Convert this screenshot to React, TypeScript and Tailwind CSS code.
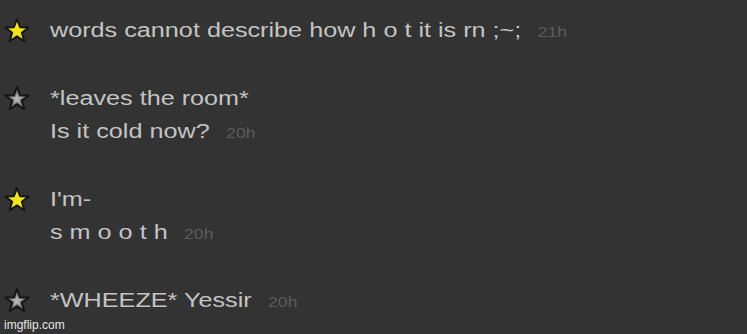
const Star = ({ filled }: { filled: boolean }) => (
  <svg width="28" height="28" viewBox="0 0 26 26" className="block">
    <path
      d="M13 2 L15.9 9.5 L23.8 9.7 L17.5 14.7 L19.8 22.5 L13 18 L6.2 22.5 L8.5 14.7 L2.2 9.7 L10.1 9.5 Z"
      fill={filled ? "#f2e41c" : "#777777"}
      stroke="#141414"
      strokeWidth="1.8"
      strokeLinejoin="round"
    />
    {!filled && (
      <path
        d="M13 7.5 L14.3 11.2 L18.2 11.4 L15.1 13.8 L16.2 17.6 L13 15.4 L9.8 17.6 L10.9 13.8 L7.8 11.4 L11.7 11.2 Z"
        fill="#b4b4b4"
      />
    )}
  </svg>
)

type Msg = { starred: boolean; lines: string[]; time: string }

const messages: Msg[] = [
  { starred: true, lines: ["words cannot describe how h o t it is rn ;~;"], time: "21h" },
  { starred: false, lines: ["*leaves the room*", "Is it cold now?"], time: "20h" },
  { starred: true, lines: ["I'm-", "s m o o t h"], time: "20h" },
  { starred: false, lines: ["*WHEEZE* Yessir"], time: "20h" },
]

export default function App() {
  return (
    <div
      className="w-[747px] h-[334px] bg-[#333333] relative overflow-hidden"
      style={{ fontFamily: '"Liberation Sans", Arial, sans-serif' }}
    >
      <div className="flex flex-col pt-[14px] gap-[33px]">
        {messages.map((m, i) => (
          <div key={i} className="flex flex-row">
            <div className="w-[50px] pl-[3px] pt-[3px] shrink-0">
              <Star filled={m.starred} />
            </div>
            <div className="flex flex-col text-[20px] leading-[33px] text-[#c4c4c4] whitespace-pre origin-left scale-x-[1.26]">
              {m.lines.map((l, j) => (
                <div key={j}>
                  {l}
                  {j === m.lines.length - 1 && (
                    <span className="ml-[13px] text-[14px] text-[#5c5c5c]">{m.time}</span>
                  )}
                </div>
              ))}
            </div>
          </div>
        ))}
      </div>
      <div className="absolute left-[4px] bottom-[2px] text-[12px] leading-[14px] text-[#e6e6e6]">
        imgflip.com
      </div>
    </div>
  )
}
